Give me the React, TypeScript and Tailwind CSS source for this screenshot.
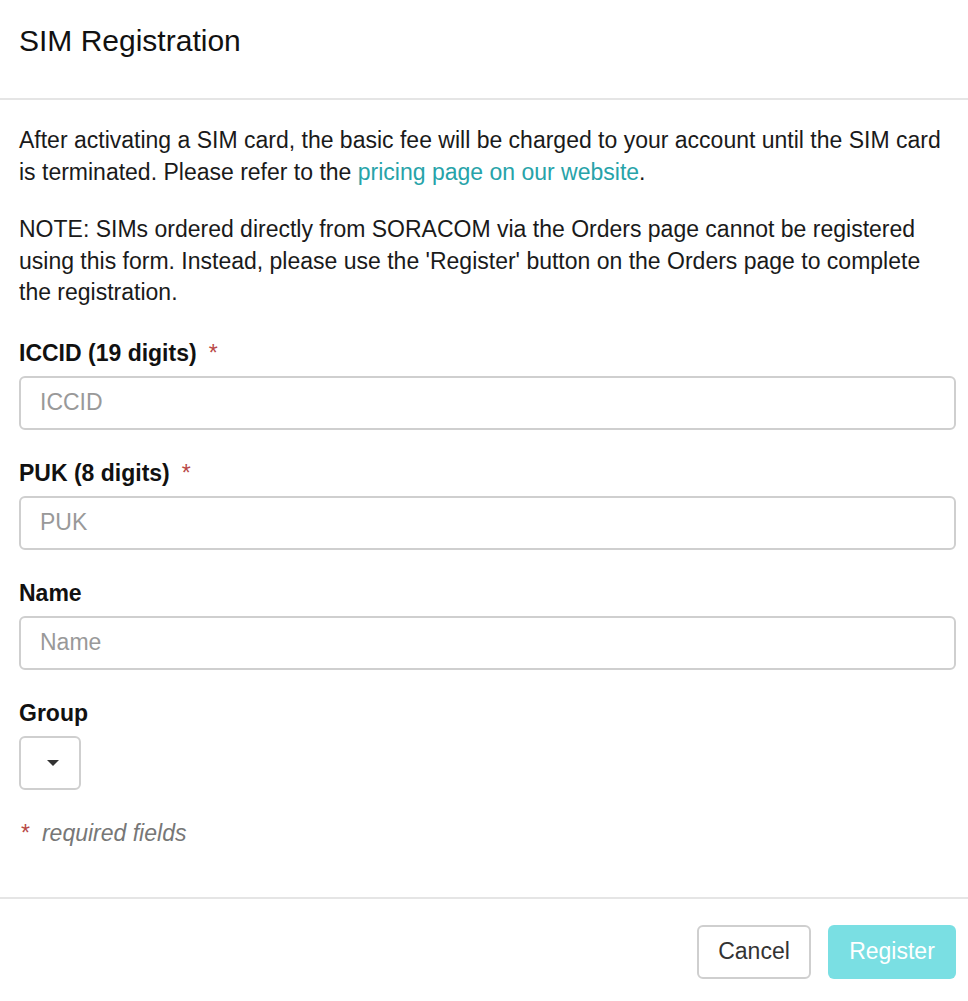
import React from "react";

const font = { fontFamily: '"Liberation Sans", Arial, sans-serif' };

const Label = ({ text, required }: { text: string; required?: boolean }) => (
  <div className="mb-[9px] flex items-center text-[23px] font-bold leading-[28px] text-[#111]">
    <span>{text}</span>
    {required && <span className="ml-[12px] font-normal text-[#b94a48]">*</span>}
  </div>
);

const Field = ({ label, placeholder, required }: { label: string; placeholder: string; required?: boolean }) => (
  <div className="mb-[29px]">
    <Label text={label} required={required} />
    <input
      placeholder={placeholder}
      className="h-[54px] w-full rounded-[6px] border-2 border-[#cfcfcf] px-[19px] text-[23px] text-[#333] outline-none placeholder:text-[#999]"
    />
  </div>
);

const App = () => {
  return (
    <div className="min-h-[1001px] w-[968px] bg-white text-[23px] text-[#1a1a1a]" style={font}>
      {/* header */}
      <div className="h-[100px] border-b-2 border-[#e5e5e5] px-[19px] pt-[26px]">
        <h4 className="text-[30px] leading-[30px] text-[#111]">SIM Registration</h4>
      </div>

      {/* body */}
      <div className="pl-[19px] pr-[12px] pt-[25px] pb-[49px]">
        <p className="mb-[26px] leading-[31.5px]">
          After activating a SIM card, the basic fee will be charged to your account until the SIM card is terminated. Please refer to the{" "}
          <a href="#" className="text-[#27a3a9]">pricing page on our website</a>.
        </p>
        <p className="mb-[30px] leading-[31.5px]">
          NOTE: SIMs ordered directly from SORACOM via the Orders page cannot be registered using this form. Instead, please use the 'Register' button on the Orders page to complete the registration.
        </p>

        <Field label="ICCID (19 digits)" placeholder="ICCID" required />
        <Field label="PUK (8 digits)" placeholder="PUK" required />
        <Field label="Name" placeholder="Name" />

        <div className="mb-[28px]">
          <Label text="Group" />
          <button className="flex h-[54px] w-[62px] items-center justify-center rounded-[6px] border-2 border-[#cfcfcf] bg-white pl-[6px]">
            <svg width="12" height="6" viewBox="0 0 12 6">
              <path d="M0 0h12L6 6z" fill="#333" />
            </svg>
          </button>
        </div>

        <div className="flex items-center leading-[30px]">
          <span className="ml-[2px] text-[#b94a48]">*</span>
          <span className="ml-[12px] italic text-[#777]">required fields</span>
        </div>
      </div>

      {/* footer */}
      <div className="flex justify-end gap-[17px] border-t-2 border-[#e5e5e5] px-[12px] pt-[26px] pb-[22px]">
        <button className="h-[54px] w-[114px] rounded-[6px] border-2 border-[#cfcfcf] bg-white text-[23px] text-[#333]">
          Cancel
        </button>
        <button className="h-[54px] w-[128px] rounded-[6px] bg-[#7adfe3] text-[23px] text-white">
          Register
        </button>
      </div>
    </div>
  );
};

export default App;
